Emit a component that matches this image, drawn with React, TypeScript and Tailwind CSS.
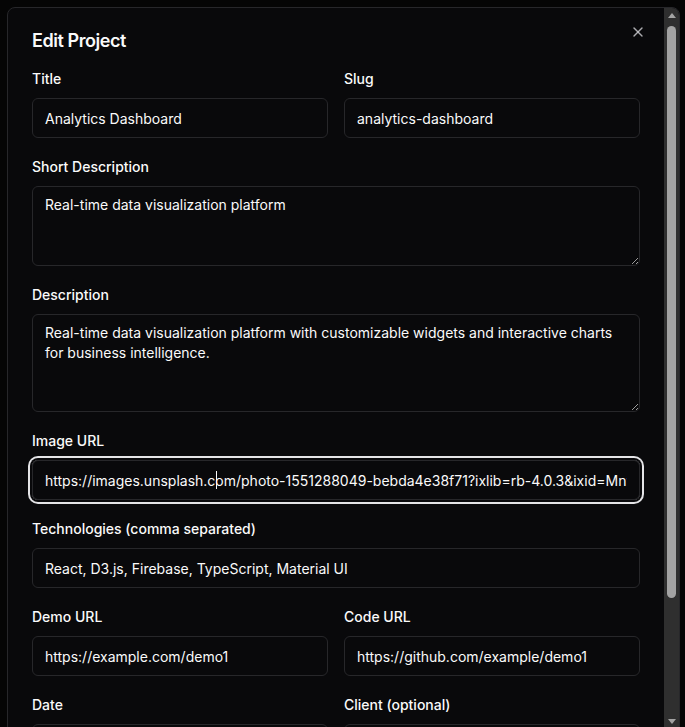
import { X } from "lucide-react";

const IMAGE_URL =
  "https://images.unsplash.com/photo-1551288049-bebda4e38f71?ixlib=rb-4.0.3&ixid=MnwxMjA3fDB8MHxwaG90by1wYWdlfHx8fGVufDB8fHx8&auto=format&fit=crop&w=1470&q=80";

const inputCls =
  "h-10 w-full rounded-md border border-[#27272a] bg-transparent px-3 text-sm text-[#fafafa] outline-none";
const textareaCls =
  "w-full rounded-md border border-[#27272a] bg-transparent px-3 py-2 text-sm leading-5 text-[#fafafa] outline-none";

function Field({ label, children }: { label: string; children: React.ReactNode }) {
  return (
    <div className="flex flex-col gap-[10px] min-w-0">
      <label className="text-sm leading-[18px] font-medium text-[#fafafa]">{label}</label>
      {children}
    </div>
  );
}

export default function App() {
  return (
    <div className="h-[727px] w-full overflow-hidden bg-[#050505] pl-[7px] pt-[7px] [color-scheme:dark] font-['Inter','Liberation_Sans',sans-serif]">
      <div className="relative flex h-[760px] w-[673px] overflow-hidden rounded-lg border border-[#27272a] bg-[#09090b]">
        {/* Form */}
        <div className="relative flex-1 px-6 pt-6">
          <button className="absolute right-[18px] top-4 text-[#d4d4d8]/80" title="Close">
            <X className="h-4 w-4" strokeWidth={2} />
          </button>

          <div className="flex flex-col gap-5">
            <h2 className="text-lg leading-[18px] font-semibold tracking-tight text-[#fafafa]">Edit Project</h2>

            <div className="grid grid-cols-2 gap-4">
              <Field label="Title">
                <input className={inputCls} defaultValue="Analytics Dashboard" />
              </Field>
              <Field label="Slug">
                <input className={inputCls} defaultValue="analytics-dashboard" />
              </Field>
            </div>

            <Field label="Short Description">
              <textarea className={`${textareaCls} h-20`} defaultValue="Real-time data visualization platform" />
            </Field>

            <Field label="Description">
              <textarea
                className={`${textareaCls} h-[98px]`}
                defaultValue="Real-time data visualization platform with customizable widgets and interactive charts for business intelligence."
              />
            </Field>

            <Field label="Image URL">
              <div className="relative">
                <input
                  className={`${inputCls} ring-2 ring-[#e4e4e7] ring-offset-2 ring-offset-[#09090b]`}
                  defaultValue={IMAGE_URL}
                />
                {/* text caret */}
                <span className="absolute left-[184px] top-[11px] h-[18px] w-px bg-[#fafafa]" />
              </div>
            </Field>

            <Field label="Technologies (comma separated)">
              <input className={inputCls} defaultValue="React, D3.js, Firebase, TypeScript, Material UI" />
            </Field>

            <div className="grid grid-cols-2 gap-4">
              <Field label="Demo URL">
                <input className={inputCls} defaultValue="https://example.com/demo1" />
              </Field>
              <Field label="Code URL">
                <input className={inputCls} defaultValue="https://github.com/example/demo1" />
              </Field>
            </div>

            <div className="grid grid-cols-2 gap-4">
              <Field label="Date">
                <input className={inputCls} defaultValue="2023-05-15" />
              </Field>
              <Field label="Client (optional)">
                <input className={inputCls} defaultValue="" />
              </Field>
            </div>
          </div>
        </div>

        {/* Scrollbar */}
        <div className="flex w-[15px] shrink-0 flex-col items-center bg-[#2f2f2f] pt-[5px]">
          <div className="h-0 w-0 border-x-[4px] border-b-[5px] border-x-transparent border-b-[#a3a3a3]" />
          <div className="mt-[8px] h-[572px] w-[9px] rounded-full bg-[#a3a3a3]" />
          <div className="mt-[121px] h-0 w-0 border-x-[4px] border-t-[5px] border-x-transparent border-t-[#a3a3a3]" />
        </div>
      </div>
    </div>
  );
}
